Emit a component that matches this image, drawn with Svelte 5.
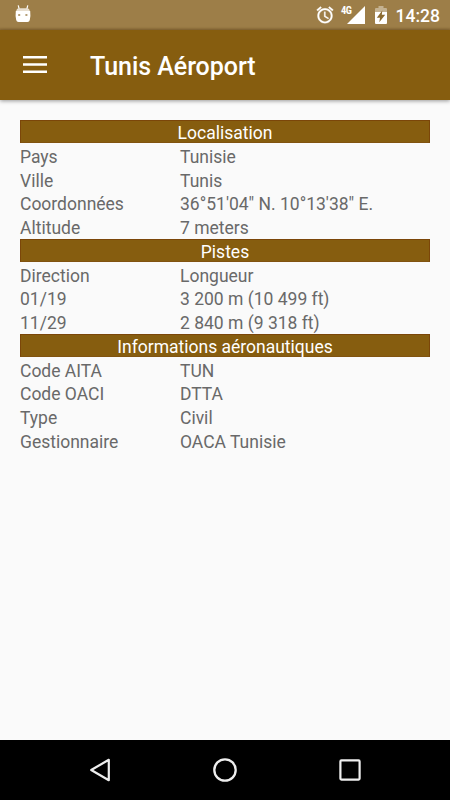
<script>
  const sections = [
    {
      title: 'Localisation',
      rows: [
        ['Pays', 'Tunisie'],
        ['Ville', 'Tunis'],
        ['Coordonnées', '36°51\'04" N. 10°13\'38" E.'],
        ['Altitude', '7 meters']
      ]
    },
    {
      title: 'Pistes',
      rows: [
        ['Direction', 'Longueur'],
        ['01/19', '3 200 m (10 499 ft)'],
        ['11/29', '2 840 m (9 318 ft)']
      ]
    },
    {
      title: 'Informations aéronautiques',
      rows: [
        ['Code AITA', 'TUN'],
        ['Code OACI', 'DTTA'],
        ['Type', 'Civil'],
        ['Gestionnaire', 'OACA Tunisie']
      ]
    }
  ];
</script>

<div class="screen">
  <div class="status">
    <svg class="droid" width="16" height="18" viewBox="0 0 16 18">
      <path d="M3.2 0.3L4.2 4M12.8 0.3L11.8 4" stroke="#fff" stroke-width="1.2" />
      <path d="M1.2 6.2Q1.5 3.2 4 3.2H12Q14.5 3.2 14.8 6.2Z" fill="#e8dfd0" />
      <path d="M0.8 6H15.2Q15.8 11 14.8 15Q14.4 17 12.5 17H3.5Q1.6 17 1.2 15Q0.2 11 0.8 6Z" fill="#fff" />
      <rect x="3.2" y="9" width="2" height="2" fill="#b59f78" />
      <rect x="10.4" y="9" width="2" height="2" fill="#b59f78" />
    </svg>
    <div class="indicators">
      <svg class="alarm" width="20" height="20" viewBox="0 0 24 24" fill="#fff" stroke="#fff" stroke-width="0.35">
        <path d="M22 5.72l-4.6-3.86-1.29 1.53 4.6 3.86L22 5.72zM7.88 3.39L6.6 1.86 2 5.71l1.29 1.53 4.59-3.85zM12.5 8H11v6l4.75 2.85.75-1.23-4-2.37V8zM12 4c-4.97 0-9 4.03-9 9s4.02 9 9 9c4.97 0 9-4.03 9-9s-4.03-9-9-9zm0 16c-3.87 0-7-3.13-7-7s3.13-7 7-7 7 3.13 7 7-3.13 7-7 7z" />
      </svg>
      <div class="signal">
        <span class="net">4G</span>
        <svg width="18" height="18" viewBox="0 0 18 18"><path d="M0 18L18 0V18Z" fill="#fff" /></svg>
      </div>
      <svg class="battery" width="12" height="18" viewBox="0 0 12 18">
        <path d="M0 6V3Q0 2 1 2H3.5V0H8.5V2H11Q12 2 12 3V6Z" fill="#c4b291" />
        <path d="M0 6H12V17Q12 18 11 18H1Q0 18 0 17Z" fill="#fff" />
        <path d="M7.3 4.5L1.8 11.8H5L4.3 16.2L10.2 8.8H6.8Z" fill="#8c6b31" />
      </svg>
      <span class="clock">14:28</span>
    </div>
  </div>

  <header>
    <svg width="24" height="17" viewBox="0 0 24 17">
      <path d="M0 1.25H24M0 8.5H24M0 15.75H24" stroke="#fff" stroke-width="2.5" />
    </svg>
    <h1>Tunis Aéroport</h1>
  </header>

  <main>
    {#each sections as section}
      <h2>{section.title}</h2>
      {#each section.rows as [label, value]}
        <div class="row"><span class="label">{label}</span><span>{value}</span></div>
      {/each}
    {/each}
  </main>

  <nav>
    <svg width="22" height="26" viewBox="0 0 22 26"><path d="M2.2 13L19.8 2.8V23.2Z" fill="none" stroke="#eee" stroke-width="2.2" stroke-linejoin="round" /></svg>
    <svg width="26" height="26" viewBox="0 0 26 26"><circle cx="13" cy="13" r="10.7" fill="none" stroke="#eee" stroke-width="2.3" /></svg>
    <svg width="22" height="22" viewBox="0 0 22 22"><rect x="1.4" y="1.4" width="19.2" height="19.2" rx="1" fill="none" stroke="#eee" stroke-width="2.2" /></svg>
  </nav>
</div>

<style>
  .screen {
    width: 450px;
    height: 800px;
    display: flex;
    flex-direction: column;
    background: #fafafa;
    font-family: Roboto, "Liberation Sans", sans-serif;
    overflow: hidden;
  }
  .status {
    height: 30px;
    flex: none;
    display: flex;
    justify-content: space-between;
    background: linear-gradient(#9d7e48 0, #9d7e48 27px, #8d6c36 30px);
    color: #fff;
  }
  .droid { margin: 5px 0 0 14.5px; }
  .indicators { display: flex; align-items: flex-start; padding-right: 10px; }
  .alarm { margin: 4.5px 6.5px 0 0; }
  .signal { display: flex; align-items: flex-start; margin-right: 10px; }
  .signal svg { margin: 6px 0 0 -7px; }
  .net {
    width: 12.5px;
    font-family: "Roboto Condensed", Roboto, "Liberation Sans", sans-serif;
    font-size: 10.5px;
    line-height: 10px;
    font-weight: 700;
    letter-spacing: -0.6px;
    margin-top: 6px;
  }
  .battery { margin: 6px 9px 0 0; }
  .clock { font-size: 17.5px; line-height: 32px; font-weight: 500; }
  header {
    height: 70px;
    flex: none;
    display: flex;
    align-items: center;
    background: #865d0f;
    color: #fff;
    box-shadow: 0 1px 4px rgba(0, 0, 0, 0.4);
  }
  header svg { margin: -1px 0 0 23px; }
  h1 { margin: 4px 0 0 43px; font-size: 25px; line-height: 30px; font-weight: 500; letter-spacing: -0.04px; }
  main { flex: 1; padding: 20px 20px 0; font-size: 17.5px; line-height: 26px; color: #696969; }
  h2 {
    box-sizing: border-box;
    height: 23.25px;
    margin: 0 0 0.5px;
    border: 1px solid #7b4609;
    border-bottom-color: #815310;
    background: #865d0f;
    color: #fff;
    font: inherit;
    line-height: 25px;
    text-align: center;
  }
  .row { display: flex; height: 23.75px; }
  .label { width: 160px; }
  nav {
    height: 60px;
    flex: none;
    display: flex;
    align-items: center;
    justify-content: space-between;
    padding: 0 89px;
    background: #000;
  }
</style>
